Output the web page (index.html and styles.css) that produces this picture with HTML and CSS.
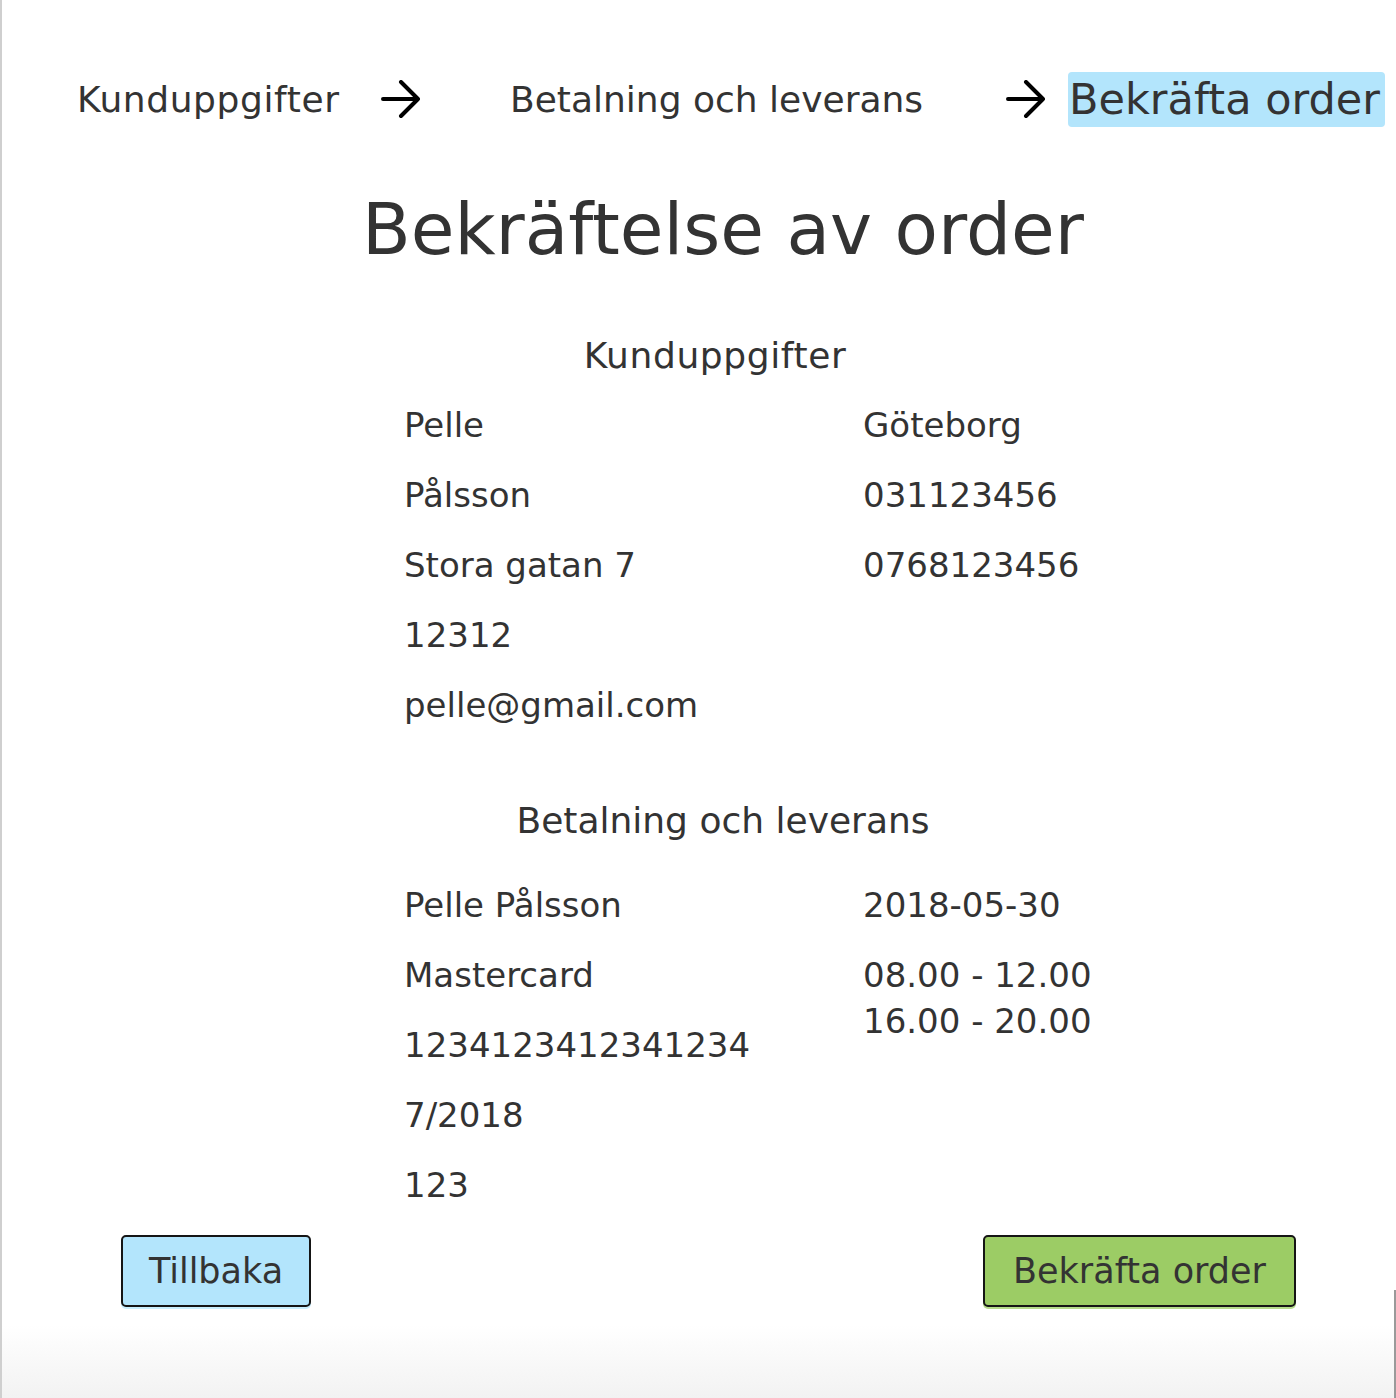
FILE: index.html
```html
<!DOCTYPE html>
<html lang="sv">
<head>
<meta charset="utf-8">
<title>Bekräftelse av order</title>
<link rel="stylesheet" href="styles.css">
</head>
<body>
<div class="page">
  <nav class="steps">
    <span class="step step-one">Kunduppgifter</span>
    <svg class="arrow" width="40" height="40" viewBox="0 0 40 40" aria-hidden="true"><path d="M2 19H37M20 2L37 19L20 36" fill="none" stroke="#000" stroke-width="4" stroke-linecap="round" stroke-linejoin="round"/></svg>
    <span class="step step-two">Betalning och leverans</span>
    <svg class="arrow" width="40" height="40" viewBox="0 0 40 40" aria-hidden="true"><path d="M2 19H37M20 2L37 19L20 36" fill="none" stroke="#000" stroke-width="4" stroke-linecap="round" stroke-linejoin="round"/></svg>
    <span class="step step-active">Bekräfta order</span>
  </nav>

  <h1 class="title">Bekräftelse av order</h1>

  <section class="block block-customer">
    <h2 class="block-title">Kunduppgifter</h2>
    <div class="details">
      <div class="col">
        <p class="item">Pelle</p>
        <p class="item">Pålsson</p>
        <p class="item">Stora gatan 7</p>
        <p class="item">12312</p>
        <p class="item">pelle@gmail.com</p>
      </div>
      <div class="col">
        <p class="item">Göteborg</p>
        <p class="item">031123456</p>
        <p class="item">0768123456</p>
      </div>
    </div>
  </section>

  <section class="block block-payment">
    <h2 class="block-title">Betalning och leverans</h2>
    <div class="details">
      <div class="col">
        <p class="item">Pelle Pålsson</p>
        <p class="item">Mastercard</p>
        <p class="item">1234123412341234</p>
        <p class="item">7/2018</p>
        <p class="item">123</p>
      </div>
      <div class="col">
        <p class="item">2018-05-30</p>
        <p class="item">08.00 - 12.00<br>16.00 - 20.00</p>
      </div>
    </div>
  </section>

  <div class="actions">
    <button class="btn btn-back" type="button">Tillbaka</button>
    <button class="btn btn-confirm" type="button">Bekräfta order</button>
  </div>
</div>
</body>
</html>
```
FILE: styles.css
```css
html {
  margin: 0;
  padding: 0;
}

body {
  margin: 0;
  min-height: 1398px;
  box-sizing: border-box;
  border-left: 2px solid #cfcfcf;
  background: linear-gradient(to bottom, #ffffff 0, #ffffff 1325px, #f2f2f2 1398px);
  font-family: "DejaVu Sans", "Liberation Sans", sans-serif;
  color: #333333;
  overflow: hidden;
}

body::after {
  content: "";
  position: fixed;
  right: 0;
  top: 1290px;
  width: 2px;
  height: 108px;
  background: #9a9a9a;
}

.page {
  display: flex;
  flex-direction: column;
}

/* Steps */
.steps {
  display: flex;
  align-items: center;
  height: 55px;
  margin-top: 72px;
  padding-left: 75px;
}

.step {
  font-size: 36px;
  line-height: 55px;
  white-space: nowrap;
}

.step-one {
  width: 304px;
  letter-spacing: 0.6px;
}

.arrow {
  flex: none;
  display: block;
}

.step-two {
  width: 496px;
  margin-left: 89px;
}

.step-active {
  margin-left: 22px;
  padding: 0 5px 0 1px;
  font-size: 43px;
  background: #b3e5fc;
  border-radius: 4px;
}

/* Title */
.title {
  margin: 58px 0 0;
  padding-left: 48px;
  text-align: center;
  font-size: 71px;
  line-height: 90px;
  font-weight: normal;
}

/* Blocks */
.block {
  display: flex;
  flex-direction: column;
}

.block-title {
  margin: 0;
  padding-left: 48px;
  text-align: center;
  font-size: 36px;
  line-height: 50px;
  font-weight: normal;
}

.block-customer {
  margin-top: 56px;
}

.block-customer .block-title {
  padding-left: 32px;
  letter-spacing: 0.6px;
}

.block-customer .details {
  margin-top: 21px;
}

.block-payment {
  margin-top: 44px;
}

.block-payment .details {
  margin-top: 36px;
}

.details {
  display: grid;
  grid-template-columns: 459px 459px;
  margin-left: 402px;
}

.item {
  margin: 0 0 24px;
  font-size: 34px;
  line-height: 46px;
  white-space: nowrap;
}

/* Actions */
.actions {
  display: flex;
  justify-content: space-between;
  align-items: flex-start;
  margin-top: 3px;
  padding: 0 100px 0 119px;
}

.btn {
  box-sizing: border-box;
  height: 72px;
  padding: 0;
  border: 2px solid #151515;
  border-radius: 5px;
  font-family: "DejaVu Sans", "Liberation Sans", sans-serif;
  font-size: 35px;
  line-height: 66px;
  color: #333333;
  text-align: center;
  cursor: pointer;
}

.btn-back {
  width: 190px;
  background: #b3e5fc;
  box-shadow: 0 2px 0 #c9eefd;
}

.btn-confirm {
  width: 313px;
  background: #9ccc65;
  box-shadow: 0 2px 0 #b5da8c;
}
```
